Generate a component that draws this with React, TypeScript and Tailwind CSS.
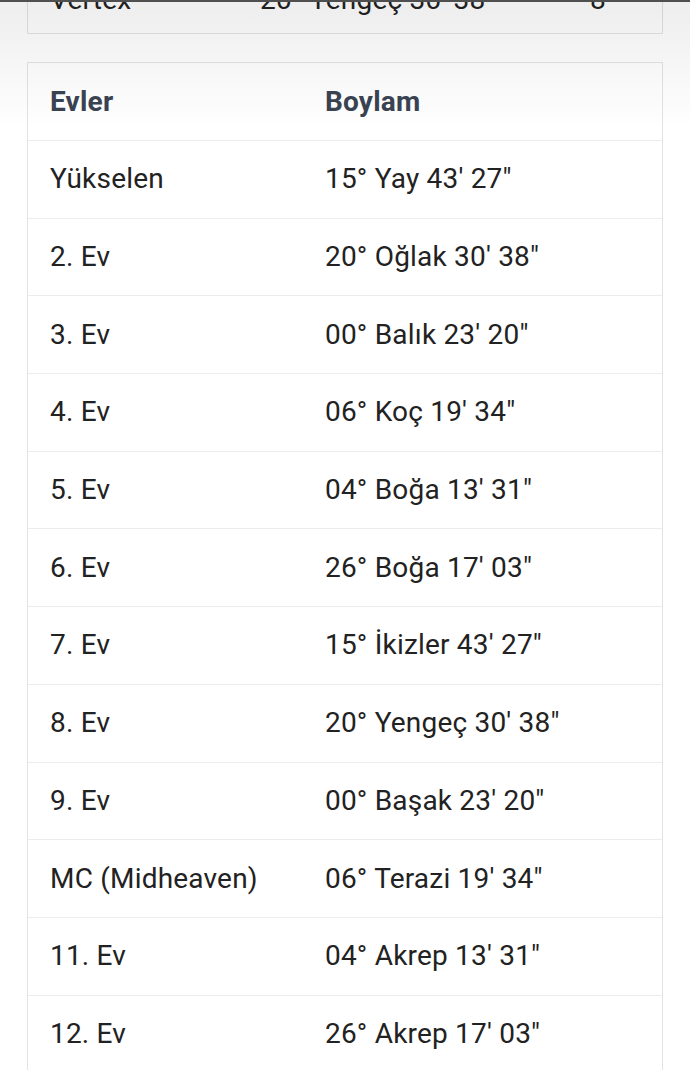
const rows: [string, string][] = [
  ['Yükselen', '15° Yay 43\' 27"'],
  ['2. Ev', '20° Oğlak 30\' 38"'],
  ['3. Ev', '00° Balık 23\' 20"'],
  ['4. Ev', '06° Koç 19\' 34"'],
  ['5. Ev', '04° Boğa 13\' 31"'],
  ['6. Ev', '26° Boğa 17\' 03"'],
  ['7. Ev', '15° İkizler 43\' 27"'],
  ['8. Ev', '20° Yengeç 30\' 38"'],
  ['9. Ev', '00° Başak 23\' 20"'],
  ['MC (Midheaven)', '06° Terazi 19\' 34"'],
  ['11. Ev', '04° Akrep 13\' 31"'],
  ['12. Ev', '26° Akrep 17\' 03"'],
]

export default function App() {
  return (
    <div className="relative h-[1070px] w-full overflow-hidden bg-white font-['Roboto',sans-serif] text-[28px] tracking-[0.2px] text-[#222]">
      {/* previous table, cut off at the top */}
      <div className="mx-[27px] mt-[-45px] border border-[#e3e3e3] bg-white">
        <div className="flex h-[77px] items-center pt-[10px] pl-[22px]">
          <span className="w-[210px]">Vertex</span>
          <span className="w-[330px]">20° Yengeç 30' 38"</span>
          <span>8</span>
        </div>
      </div>

      <div className="mx-[27px] mt-[28px] border border-[#e3e3e3] bg-white">
        <div className="grid h-[78px] grid-cols-[275px_1fr] items-center border-b border-[#ececec] pl-[22px] font-bold text-[#3a4352]">
          <span>Evler</span>
          <span>Boylam</span>
        </div>
        {rows.map(([ev, boylam]) => (
          <div
            key={ev}
            className="grid h-[77.7px] grid-cols-[275px_1fr] items-center border-b border-[#ececec] pl-[22px]"
          >
            <span>{ev}</span>
            <span>{boylam}</span>
          </div>
        ))}
      </div>

      {/* top bar shadow */}
      <div className="pointer-events-none absolute inset-x-0 top-0 h-[2px] bg-[#555]" />
      <div className="pointer-events-none absolute inset-x-0 top-0 h-[130px] bg-gradient-to-b from-[rgba(0,0,0,0.07)] to-transparent" />
    </div>
  )
}
